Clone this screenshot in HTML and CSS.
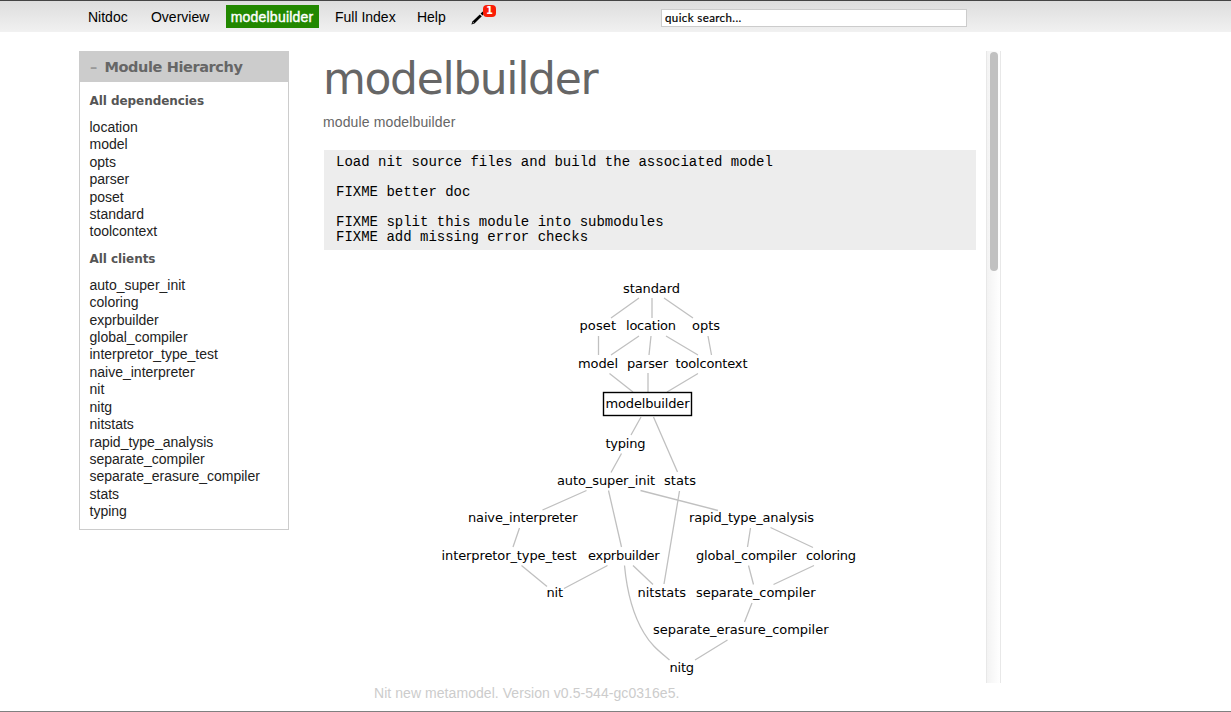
FILE: index.html
```html
<!DOCTYPE html>
<html lang="en">
<head>
<meta charset="utf-8">
<title>modelbuilder | Nitdoc</title>
<link rel="stylesheet" href="styles.css">
</head>
<body>
<header class="topbar">
  <nav class="menu">
    <a class="menu-item home">Nitdoc</a>
    <a class="menu-item">Overview</a>
    <a class="menu-item active">modelbuilder</a>
    <a class="menu-item">Full Index</a>
    <a class="menu-item">Help</a>
    <span class="edit">
      <svg class="pencil" width="14" height="14" viewBox="0 0 14 14"><path d="M0.4 13.6L1.4 10.4L8.8 3.4L10.8 5.3L3.500 12.500Z"/><path d="M9.600 2.600L11.500 0.800Q12.300 0.200 13 .9Q13.800 1.700 13.200 2.500L11.500 4.500Z"/><path class="tip" d="M1.500 12.500L2.900 11.700L2.200 11Z"/></svg>
      <span class="badge">1</span>
    </span>
  </nav>
  <input class="search" type="text" value="quick search..." aria-label="quick search">
</header>
<div class="page">
  <aside class="sidebar">
    <h3 class="side-title"><span class="fold">–</span> Module Hierarchy</h3>
    <h4 class="side-heading">All dependencies</h4>
    <ul class="modules">
      <li>location</li><li>model</li><li>opts</li><li>parser</li><li>poset</li><li>standard</li><li>toolcontext</li>
    </ul>
    <h4 class="side-heading">All clients</h4>
    <ul class="modules">
      <li>auto_super_init</li><li>coloring</li><li>exprbuilder</li><li>global_compiler</li><li>interpretor_type_test</li><li>naive_interpreter</li><li>nit</li><li>nitg</li><li>nitstats</li><li>rapid_type_analysis</li><li>separate_compiler</li><li>separate_erasure_compiler</li><li>stats</li><li>typing</li>
    </ul>
  </aside>
  <main class="content">
    <h1 class="title">modelbuilder</h1>
    <div class="subtitle">module modelbuilder</div>
    <pre class="doc">Load nit source files and build the associated model

FIXME better doc

FIXME split this module into submodules
FIXME add missing error checks</pre>
    <svg class="graph" width="652" height="410" viewBox="324 270 652 410">
      <g class="edges">
        <path d="M639 298L611 318M652 298V318M664 298L693 318"/>
        <path d="M598.5 336V355M639 336L611 355M651 336L649 355M666 336L698 355M708 336L711.5 355"/>
        <path d="M609.500 373.500L633 392M648 373V392M698 373.500L667 392"/>
        <path d="M641 417L631 435M653.500 417L677.500 472M621.500 453.500L611 472.500"/>
        <path d="M586.500 490.500L542.500 510M608.500 490.500L621.500 547M640.500 490.500L718 510.500M679.500 491L664 584"/>
        <path d="M519.500 528L513 547M750.500 528L747.500 547M770.500 527.500L813 547.500"/>
        <path d="M521.500 565.500L547 586.500M607.500 565.500L564 588.500M633 565.500L653 584.500M624.500 565.500C627 592 633 615 644 633C651 645 659 651 669.500 660"/>
        <path d="M748.500 565.500L753.500 584.500M814 565.500L773.500 584.500M752 603L744.500 622M727.500 640L695 660"/>
      </g>
      <rect class="focus" x="603.5" y="392.500" width="88" height="23"/>
      <g class="labels">
        <text x="623" y="293" textLength="57">standard</text>
        <text x="579.500" y="330" textLength="36.500">poset</text>
        <text x="626" y="330" textLength="50">location</text>
        <text x="692" y="330" textLength="28">opts</text>
        <text x="578" y="368" textLength="40">model</text>
        <text x="627" y="368" textLength="41">parser</text>
        <text x="675.500" y="368" textLength="72">toolcontext</text>
        <text x="605.500" y="408" textLength="84">modelbuilder</text>
        <text x="605.500" y="448" textLength="40">typing</text>
        <text x="557" y="485" textLength="98">auto_super_init</text>
        <text x="664" y="485" textLength="32">stats</text>
        <text x="468" y="522" textLength="109.500">naive_interpreter</text>
        <text x="689" y="522" textLength="125">rapid_type_analysis</text>
        <text x="441.500" y="560" textLength="135">interpretor_type_test</text>
        <text x="588" y="560" textLength="71.500">exprbuilder</text>
        <text x="696" y="560" textLength="100.500">global_compiler</text>
        <text x="806" y="560" textLength="50">coloring</text>
        <text x="546.500" y="597" textLength="16.500">nit</text>
        <text x="637.500" y="597" textLength="48.500">nitstats</text>
        <text x="696" y="597" textLength="119.500">separate_compiler</text>
        <text x="653" y="634" textLength="175.500">separate_erasure_compiler</text>
        <text x="669.500" y="672" textLength="24.500">nitg</text>
      </g>
    </svg>
  </main>
  <div class="scrollbar"><div class="thumb"></div></div>
</div>
<footer class="footer">Nit new metamodel. Version v0.5-544-gc0316e5.</footer>
</body>
</html>
```

FILE: styles.css
```css
* { box-sizing: border-box; }
body {
  margin: 0;
  height: 712px;
  overflow: hidden;
  display: flex;
  flex-direction: column;
  background: #fff;
  border-bottom: 1px solid #808080;
  font: 14px "Liberation Sans", Helvetica, Arial, sans-serif;
  color: #222;
}
.topbar {
  height: 32px;
  flex: none;
  display: flex;
  align-items: flex-start;
  padding-left: 83px;
  border-top: 1px solid #444;
  background: linear-gradient(#ddd, #f1f1f1);
}
.menu { display: flex; gap: 11.3px; width: 578px; padding-top: 4px; }
.menu-item { padding: 0 5px; height: 23px; line-height: 24px; color: #000; white-space: nowrap; }
.home { margin-right: 2px; }
.active { width: 93px; letter-spacing: .22px; background: #228800; color: #fff; -webkit-text-stroke: .4px #fff; }
.edit { position: relative; margin-left: 9px; width: 26px; height: 23px; }
.pencil { display: block; margin-top: 6px; }
.tip { fill: #eee; }
.badge {
  position: absolute;
  left: 12px;
  top: 0;
  width: 13px;
  height: 12px;
  border-radius: 4px;
  background: #fa1d05;
  color: #fff;
  font: bold 10px/12px "DejaVu Sans", sans-serif;
  text-align: center;
}
.search {
  margin-top: 8px;
  width: 306px;
  height: 18px;
  padding: 0 3px 2px;
  border: 1px solid #ccc;
  background: #fff;
  color: #000;
  font: 11.500px Lato, sans-serif;
  letter-spacing: .4px;
  -webkit-text-stroke: .2px #000;
}
.page { display: flex; height: 632px; margin: 19px 0 0 79px; flex: none; }
.sidebar { width: 210px; height: 479px; border: 1px solid #ccc; }
.side-title {
  margin: 0;
  height: 30px;
  padding-left: 10px;
  background: #ccc;
  color: #666;
  font: bold 14.500px/31px "DejaVu Sans", Verdana, sans-serif;
  letter-spacing: -.4px;
}
.fold { margin-right: 3px; color: #999; }
.side-heading {
  margin: 12px 0 0 9.500px;
  color: #555;
  font: bold 12px/14px "DejaVu Sans", Verdana, sans-serif;
  letter-spacing: -.06px;
}
.modules { list-style: none; margin: 11px 0 0 9.500px; padding: 0; line-height: 17.400px; }
.side-heading + .modules + .side-heading { margin-top: 11px; }
.content { width: 663px; margin-left: 35px; }
.title {
  margin: 0;
  height: 55px;
  color: #666;
  font: 44px/55px "DejaVu Sans", Verdana, sans-serif;
  letter-spacing: -1.350px;
  margin-left: -1px;
}
.subtitle { height: 44px; line-height: 33px; color: #666; margin-left: -1px; letter-spacing: .13px; }
.doc {
  margin: 0;
  width: 652px;
  height: 100px;
  padding: 5px 12px;
  background: #ededed;
  color: #000;
  font: 14px/15px "Liberation Mono", Courier, monospace;
}
.graph { display: block; margin-top: 20px; }
.edges { fill: none; stroke: #c0c0c0; stroke-width: 1.300; }
.focus { fill: none; stroke: #000; stroke-width: 1.400; }
.labels { font: 13px "DejaVu Sans", sans-serif; fill: #000; }
.scrollbar {
  width: 15px;
  margin-left: -1px;
  padding: 1px 3px;
  border: solid #e8e8e8;
  border-width: 0 1px;
  background: linear-gradient(90deg, #f3f3f3, #fff);
}
.thumb { width: 8px; height: 219px; border-radius: 4px; background: #c1c1c1; }
.footer { margin: 2px 0 0 374px; line-height: 17px; color: #ccc; letter-spacing: .06px; }
```
